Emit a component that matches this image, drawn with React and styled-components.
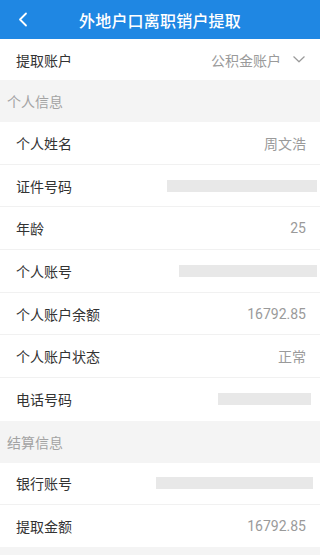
import React from "react";
import styled, { createGlobalStyle } from "styled-components";

const Global = createGlobalStyle`
  html, body { margin: 0; padding: 0; background: #f4f4f4; }
  body { font-family: Roboto, "Noto Sans CJK SC", "Noto Sans", sans-serif; }
  * { box-sizing: border-box; }
`;

const Page = styled.div`
  width: 320px;
  min-height: 555px;
  background: #f4f4f4;
  display: flex;
  flex-direction: column;
`;

const Header = styled.div`
  height: 39px;
  background: #1f87e3;
  display: grid;
  grid-template-columns: 40px 1fr 40px;
  align-items: center;
`;

const BackBtn = styled.div`
  display: flex;
  align-items: center;
  padding-left: 18px;
  height: 100%;
`;

const Title = styled.div`
  color: #fff;
  font-size: 16px;
  font-weight: 500;
  text-align: center;
  letter-spacing: 0.2px;
`;

const Row = styled.div`
  height: ${(p) => p.$h || 42.7}px;
  background: #fff;
  display: flex;
  align-items: center;
  justify-content: space-between;
  padding: 0 14px 0 16px;
  border-bottom: ${(p) => (p.$noBorder ? "none" : "1px solid #f1f1f1")};
`;

const Label = styled.span`
  font-size: 14px;
  color: #333;
`;

const Value = styled.span`
  font-size: 14px;
  color: #9a9a9a;
`;

const Select = styled.div`
  display: flex;
  align-items: center;
  gap: 12px;
  font-size: 14px;
  color: #9a9a9a;
  margin-right: 1px;
`;

const Masked = styled.div`
  height: 12px;
  width: ${(p) => p.$w}px;
  background: #e8e8e8;
  margin-right: ${(p) => -p.$over}px;
`;

const Section = styled.div`
  height: 42px;
  display: flex;
  align-items: center;
  padding-left: 7px;
  font-size: 14px;
  color: #a3a3a3;
  background: #f4f4f4;
`;

const Group = styled.div`
  display: flex;
  flex-direction: column;
`;

const personal = [
  { label: "个人姓名", value: "周文浩" },
  { label: "证件号码", mask: { w: 150, over: 11 } },
  { label: "年龄", value: "25" },
  { label: "个人账号", mask: { w: 138, over: 11 } },
  { label: "个人账户余额", value: "16792.85" },
  { label: "个人账户状态", value: "正常" },
  { label: "电话号码", mask: { w: 93, over: 5 } },
];

const settle = [
  { label: "银行账号", mask: { w: 157, over: 7 } },
  { label: "提取金额", value: "16792.85" },
];

function Item({ item, h, last }) {
  return (
    <Row $h={h} $noBorder={last}>
      <Label>{item.label}</Label>
      {item.mask ? (
        <Masked $w={item.mask.w} $over={item.mask.over} />
      ) : (
        <Value>{item.value}</Value>
      )}
    </Row>
  );
}

export default function App() {
  return (
    <>
      <Global />
      <Page>
        <Header>
          <BackBtn>
            <svg width="10" height="15" viewBox="0 0 10 15">
              <polyline
                points="8,1.5 2,7.5 8,13.5"
                fill="none"
                stroke="#fff"
                strokeWidth="1.8"
                strokeLinecap="round"
                strokeLinejoin="round"
              />
            </svg>
          </BackBtn>
          <Title>外地户口离职销户提取</Title>
          <div />
        </Header>
        <Row $h={41} $noBorder>
          <Label>提取账户</Label>
          <Select>
            <span>公积金账户</span>
            <svg width="12" height="7" viewBox="0 0 12 7">
              <polyline
                points="0.8,0.8 6,5.8 11.2,0.8"
                fill="none"
                stroke="#9a9a9a"
                strokeWidth="1.2"
                strokeLinecap="round"
                strokeLinejoin="round"
              />
            </svg>
          </Select>
        </Row>
        <Section>个人信息</Section>
        <Group>
          {personal.map((it, i) => (
            <Item key={it.label} item={it} h={42.7} last={i === personal.length - 1} />
          ))}
        </Group>
        <Section>结算信息</Section>
        <Group>
          {settle.map((it, i) => (
            <Item key={it.label} item={it} h={42} last={i === settle.length - 1} />
          ))}
        </Group>
      </Page>
    </>
  );
}
